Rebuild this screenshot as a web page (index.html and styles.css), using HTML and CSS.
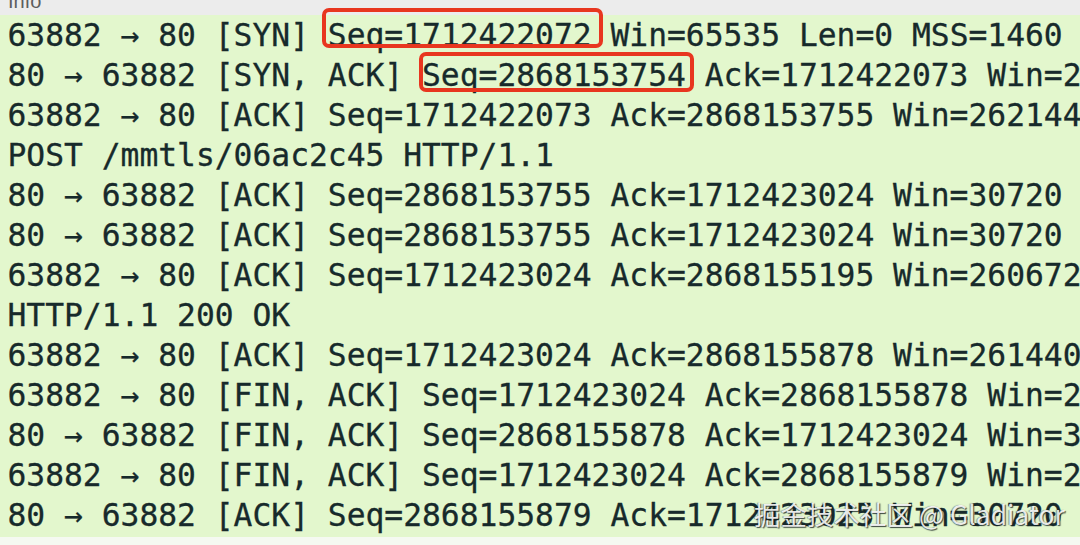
FILE: index.html
```html
<!DOCTYPE html>
<html>
<head>
<meta charset="utf-8">
<link rel="stylesheet" href="styles.css">
</head>
<body>
<div class="pane">
  <div class="header"><span class="header-label">Info</span></div>
  <div class="rows">
    <div class="row">63882 → 80 [SYN] <span class="mark mark-a">Seq=1712422072</span> Win=65535 Len=0 MSS=1460 WS=64 TSval=1</div>
    <div class="row">80 → 63882 [SYN, ACK] <span class="mark mark-b">Seq=2868153754</span> Ack=1712422073 Win=28960 Len=0</div>
    <div class="row">63882 → 80 [ACK] Seq=1712422073 Ack=2868153755 Win=262144 Len=0</div>
    <div class="row">POST /mmtls/06ac2c45 HTTP/1.1</div>
    <div class="row">80 → 63882 [ACK] Seq=2868153755 Ack=1712423024 Win=30720 Len=0</div>
    <div class="row">80 → 63882 [ACK] Seq=2868153755 Ack=1712423024 Win=30720 Len=0</div>
    <div class="row">63882 → 80 [ACK] Seq=1712423024 Ack=2868155195 Win=260672 Len=0</div>
    <div class="row">HTTP/1.1 200 OK</div>
    <div class="row">63882 → 80 [ACK] Seq=1712423024 Ack=2868155878 Win=261440 Len=0</div>
    <div class="row">63882 → 80 [FIN, ACK] Seq=1712423024 Ack=2868155878 Win=262144</div>
    <div class="row">80 → 63882 [FIN, ACK] Seq=2868155878 Ack=1712423024 Win=30720</div>
    <div class="row">63882 → 80 [FIN, ACK] Seq=1712423024 Ack=2868155879 Win=262144</div>
    <div class="row">80 → 63882 [ACK] Seq=2868155879 Ack=1712423025 Win=30720</div>
  </div>
  <div class="watermark">掘金技术社区 @ Gladiator</div>
</div>
</body>
</html>
```
FILE: styles.css
```css
html, body {
  margin: 0;
  padding: 0;
  background: #f5f9f1;
}
.pane {
  position: relative;
  width: 1080px;
  height: 545px;
  overflow: hidden;
}
.header {
  height: 15px;
  background: #ececec;
  overflow: hidden;
  padding-left: 8px;
}
.header-label {
  display: block;
  margin-top: -9px;
  font-family: "Liberation Sans", Arial, sans-serif;
  font-size: 20px;
  line-height: 20px;
  color: #5e5e5e;
}
.rows {
  background: #e3f7cd;
  padding-bottom: 2px;
}
.row {
  height: 40px;
  line-height: 40px;
  padding-left: 7.5px;
  font-family: "DejaVu Sans Mono", monospace;
  font-size: 31.3px;
  color: #172a2b;
  -webkit-text-stroke: 0.3px #172a2b;
  white-space: pre;
}
.mark {
  position: relative;
}
.mark::after {
  content: "";
  position: absolute;
  border: 4px solid #e8361f;
  border-radius: 7px;
}
.mark-a::after {
  left: -6px;
  right: -11px;
  top: -9px;
  bottom: 5px;
}
.mark-b::after {
  left: -3px;
  right: -8px;
  top: -5px;
  bottom: 1px;
}
.watermark {
  position: absolute;
  left: 754px;
  top: 497px;
  font-family: "Noto Sans CJK SC", "Noto Sans", sans-serif;
  font-size: 26.5px;
  line-height: 34px;
  color: rgba(255, 255, 255, 0.88);
  text-shadow: 1px 1px 1px rgba(20, 30, 30, 0.8), -1px 0 1px rgba(20, 30, 30, 0.45);
  white-space: pre;
}
```
